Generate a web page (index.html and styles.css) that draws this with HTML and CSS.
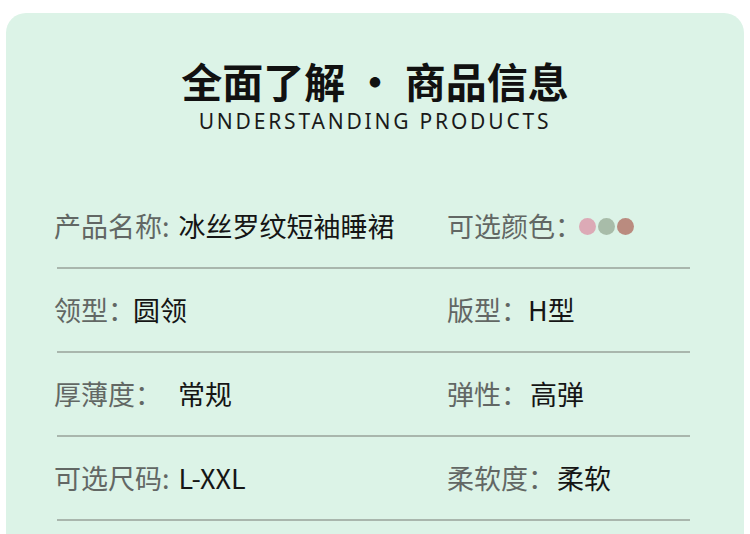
FILE: index.html
```html
<!DOCTYPE html>
<html lang="zh">
<head>
<meta charset="utf-8">
<link rel="stylesheet" href="styles.css">
</head>
<body>
<div class="card">
  <div class="head">
    <h1 class="title">全面了解 · 商品信息</h1>
    <div class="subtitle">UNDERSTANDING PRODUCTS</div>
  </div>
  <div class="rows">
    <div class="row">
      <div class="cell"><span class="label">产品名称:</span><span class="value v-name">冰丝罗纹短袖睡裙</span></div>
      <div class="cell"><span class="label">可选颜色：</span><span class="dots"><i class="dot pink"></i><i class="dot sage"></i><i class="dot brown"></i></span></div>
    </div>
    <div class="row">
      <div class="cell"><span class="label">领型：</span><span class="value v-tight">圆领</span></div>
      <div class="cell"><span class="label">版型：</span><span class="value">H型</span></div>
    </div>
    <div class="row">
      <div class="cell"><span class="label">厚薄度：</span><span class="value v-gap">常规</span></div>
      <div class="cell"><span class="label">弹性：</span><span class="value v-small">高弹</span></div>
    </div>
    <div class="row">
      <div class="cell"><span class="label">可选尺码:</span><span class="value v-name">L-XXL</span></div>
      <div class="cell"><span class="label">柔软度：</span><span class="value v-small">柔软</span></div>
    </div>
  </div>
</div>
</body>
</html>
```
FILE: styles.css
```css
html, body {
  margin: 0;
  padding: 0;
  background: #ffffff;
  height: 534px;
  overflow: hidden;
}
body {
  font-family: "Noto Sans CJK SC", "Noto Sans", sans-serif;
}
.card {
  margin: 13px 6px 0;
  height: 540px;
  background: #dcf3e7;
  border-radius: 20px 20px 0 0;
  padding-top: 45px;
  box-sizing: border-box;
}
.head {
  text-align: center;
}
.title {
  margin: 0;
  font-size: 41px;
  line-height: 44px;
  font-weight: 700;
  color: #111111;
}
.subtitle {
  margin-top: 7px;
  font-family: "Noto Sans", sans-serif;
  font-size: 21px;
  line-height: 24px;
  letter-spacing: 2.8px;
  color: #1a1a1a;
}
.rows {
  margin: 52px 0 0 48px;
  width: 636px;
}
.row {
  display: grid;
  grid-template-columns: 393px 1fr;
  height: 82px;
  align-items: center;
  border-bottom: 2px solid #a9b6ad;
  margin-left: 3px;
}
.cell {
  display: flex;
  align-items: center;
  font-size: 27px;
  line-height: 30px;
  margin-left: -3px;
}
.label {
  color: #626764;
}
.value {
  color: #151515;
}
.v-name {
  margin-left: 9px;
}
.v-tight {
  margin-left: -2px;
}
.v-gap {
  margin-left: 16px;
}
.v-small {
  margin-left: 2px;
}
.dots {
  display: flex;
  gap: 2px;
  margin-left: -3px;
}
.dot {
  display: block;
  width: 17px;
  height: 17px;
  border-radius: 50%;
}
.pink { background: #dcaab6; }
.sage { background: #a8bca9; }
.brown { background: #ba8b7f; }
```
